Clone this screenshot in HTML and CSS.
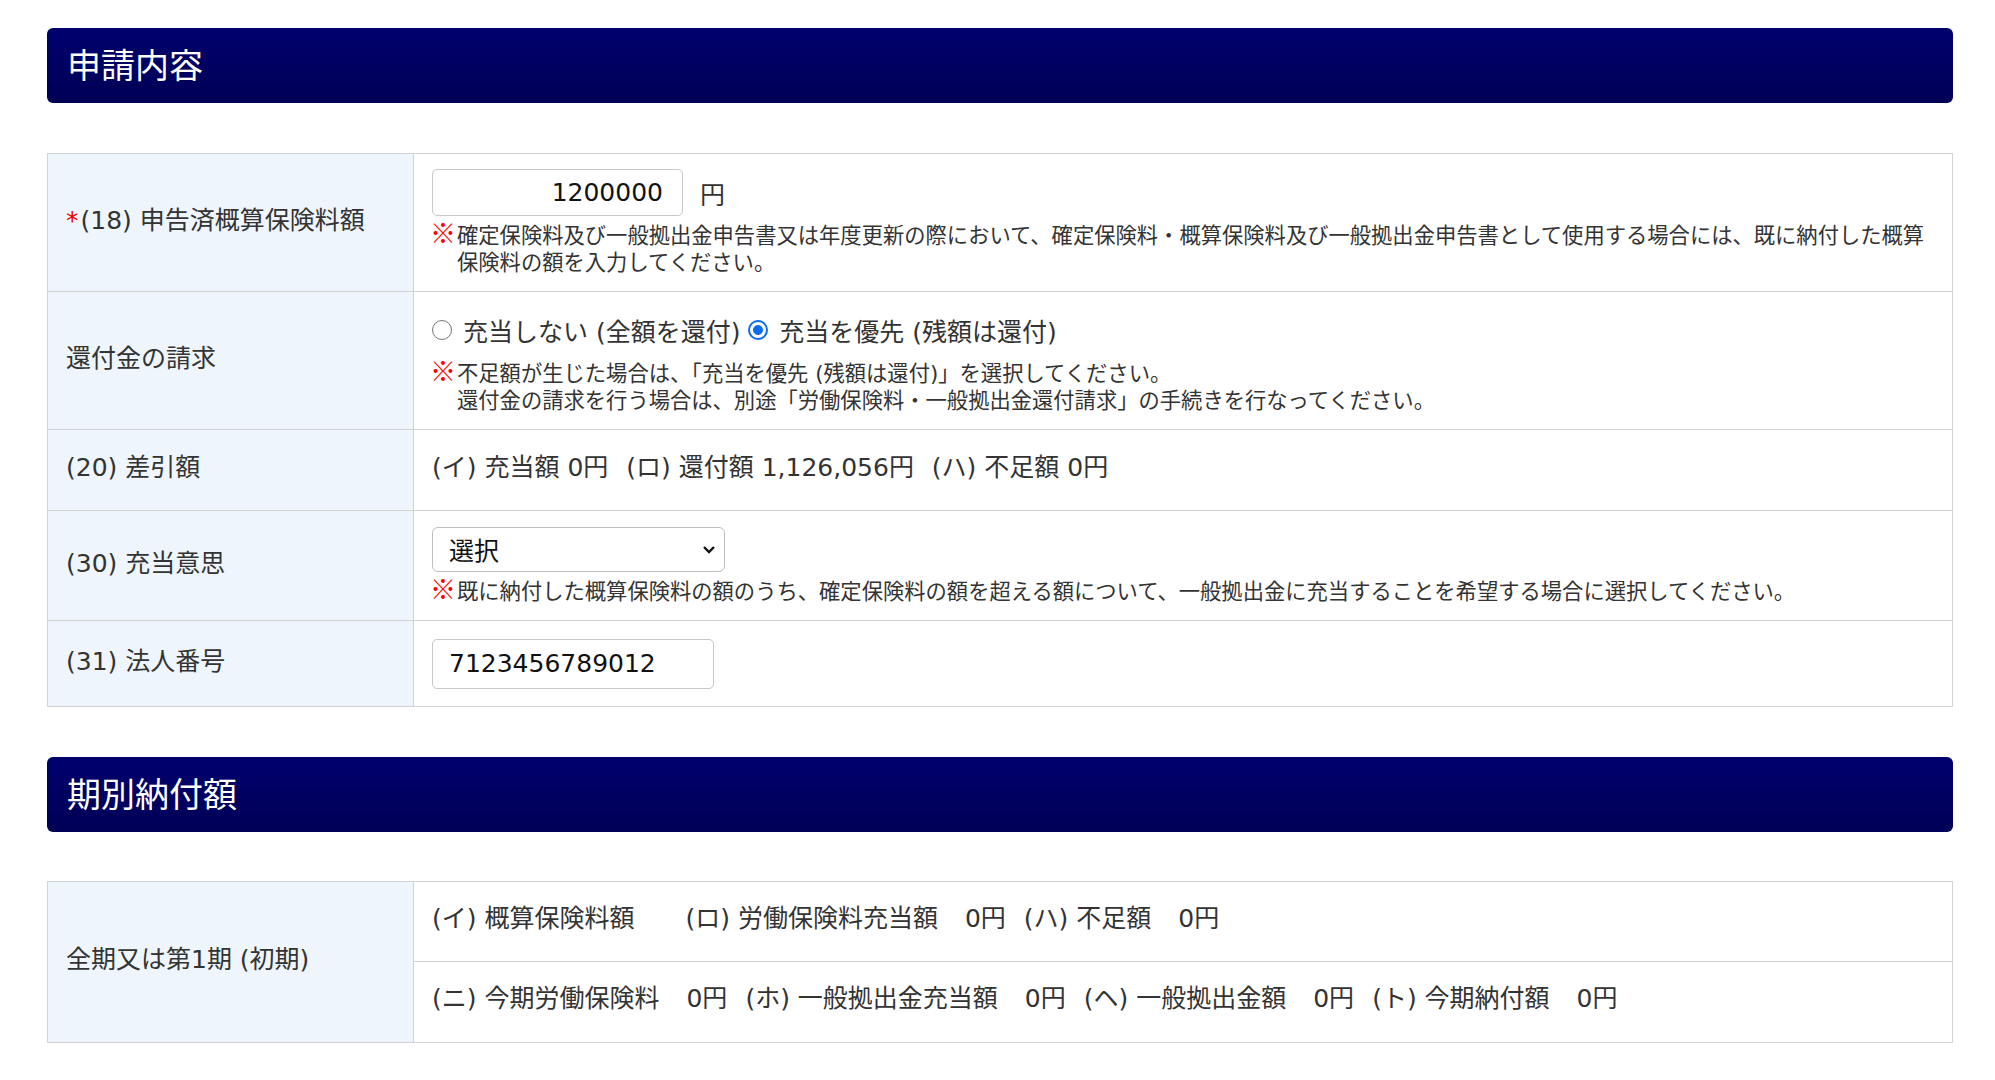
FILE: index.html
```html
<!DOCTYPE html>
<html lang="ja">
<head>
    <meta charset="UTF-8">
    <meta name="viewport" content="width=device-width, initial-scale=1.0">
    <title>申請内容</title>
    <link rel="stylesheet" href="styles.css">
</head>
<body>
    <div class="page">
        <h2 class="section-title">申請内容</h2>

        <table class="form-table">
            <tr class="row-18">
                <th><span class="req">*</span>(18) 申告済概算保険料額</th>
                <td>
                    <div class="amount-line">
                        <input type="text" class="text-input num" value="1200000">
                        <span class="unit">円</span>
                    </div>
                    <p class="note"><span class="mark">※</span>確定保険料及び一般拠出金申告書又は年度更新の際において、確定保険料・概算保険料及び一般拠出金申告書として使用する場合には、既に納付した概算<br>保険料の額を入力してください。</p>
                </td>
            </tr>
            <tr class="row-refund">
                <th>還付金の請求</th>
                <td>
                    <div class="radio-line">
                        <label class="radio"><input type="radio" name="refund"> 充当しない (全額を還付)</label>
                        <label class="radio"><input type="radio" name="refund" checked> 充当を優先 (残額は還付)</label>
                    </div>
                    <p class="note"><span class="mark">※</span>不足額が生じた場合は、「充当を優先 (残額は還付)」を選択してください。<br>還付金の請求を行う場合は、別途「労働保険料・一般拠出金還付請求」の手続きを行なってください。</p>
                </td>
            </tr>
            <tr class="row-20">
                <th>(20) 差引額</th>
                <td class="plain">
                    <span class="pair">(イ) 充当額 0円</span>
                    <span class="pair">(ロ) 還付額 1,126,056円</span>
                    <span class="pair">(ハ) 不足額 0円</span>
                </td>
            </tr>
            <tr class="row-30">
                <th>(30) 充当意思</th>
                <td>
                    <div class="select-wrap">
                        <select class="select">
                            <option>選択</option>
                        </select>
                        <svg class="chevron" width="14" height="10" viewBox="0 0 14 10">
                            <path d="M2 2 L7 7 L12 2" fill="none" stroke="#111" stroke-width="2.4"/>
                        </svg>
                    </div>
                    <p class="note"><span class="mark">※</span>既に納付した概算保険料の額のうち、確定保険料の額を超える額について、一般拠出金に充当することを希望する場合に選択してください。</p>
                </td>
            </tr>
            <tr class="row-31">
                <th>(31) 法人番号</th>
                <td>
                    <input type="text" class="text-input corp" value="7123456789012">
                </td>
            </tr>
        </table>

        <h2 class="section-title">期別納付額</h2>

        <table class="form-table period-table">
            <tr>
                <th rowspan="2">全期又は第1期 (初期)</th>
                <td class="plain">
                    <div class="items">
                        <span class="item">(イ) 概算保険料額<span class="amt blank"></span></span>
                        <span class="item">(ロ) 労働保険料充当額<span class="amt">0円</span></span>
                        <span class="item">(ハ) 不足額<span class="amt">0円</span></span>
                    </div>
                </td>
            </tr>
            <tr>
                <td class="plain">
                    <div class="items">
                        <span class="item">(ニ) 今期労働保険料<span class="amt">0円</span></span>
                        <span class="item">(ホ) 一般拠出金充当額<span class="amt">0円</span></span>
                        <span class="item">(ヘ) 一般拠出金額<span class="amt">0円</span></span>
                        <span class="item">(ト) 今期納付額<span class="amt">0円</span></span>
                    </div>
                </td>
            </tr>
        </table>
    </div>
</body>
</html>
```

FILE: styles.css
```css
body {
    margin: 0;
    background: #fff;
    color: #333;
    font-family: "DejaVu Sans", "Noto Sans CJK JP", sans-serif;
    font-size: 25px;
}
.page {
    padding: 28px 42px 30px 47px;
}
.section-title {
    margin: 0;
    height: 75px;
    box-sizing: border-box;
    display: flex;
    align-items: center;
    padding: 0 0 5px 20px;
    border-radius: 6px;
    background: linear-gradient(#00006e, #000056);
    color: #fff;
    font-family: "Noto Sans CJK JP", sans-serif;
    font-size: 34px;
    font-weight: normal;
}
.form-table {
    width: 100%;
    border-collapse: collapse;
    margin: 50px 0 50px;
}
.form-table th,
.form-table td {
    border: 1px solid #d2d2d2;
    vertical-align: middle;
}
.form-table th {
    width: 347px;
    padding: 0 0 4px 18px;
    background: #eef5fc;
    text-align: left;
    font-weight: normal;
    line-height: 34px;
}
.form-table td {
    padding: 0 18px;
    background: #fff;
}
.req {
    color: #e00;
    margin-right: 2px;
}
.row-18 td { height: 137px; }
.row-refund td { height: 137px; }
.row-20 td { height: 76px; }
.row-30 td { height: 109px; }
.row-31 td { height: 85px; }

.amount-line {
    display: flex;
    align-items: center;
}
.text-input {
    box-sizing: border-box;
    height: 47px;
    border: 1px solid #c8c8c8;
    border-radius: 5px;
    font-family: "DejaVu Sans", "Noto Sans CJK JP", sans-serif;
    font-size: 25px;
    color: #111;
    background: #fff;
}
.num {
    width: 251px;
    padding: 0 19px 0 10px;
    text-align: right;
}
.corp {
    width: 282px;
    height: 50px;
    padding: 0 16px;
}
.unit {
    margin-left: 17px;
}
.note {
    margin: 6px 0 0;
    padding-left: 25px;
    text-indent: -25px;
    font-size: 21.3px;
    line-height: 27px;
    color: #333;
}
.mark {
    display: inline-block;
    width: 25px;
    text-indent: 0;
    color: #f00;
    font-family: "Noto Sans CJK JP", sans-serif;
    font-size: 26px;
    font-weight: 900;
    line-height: 20px;
    margin-left: -2px;
    margin-right: 2px;
}
.radio-line {
    display: flex;
    align-items: center;
    height: 44px;
    padding-bottom: 2px;
}
.radio {
    display: flex;
    align-items: center;
    margin-right: 8px;
    white-space: pre;
}
.radio input {
    appearance: none;
    box-sizing: border-box;
    width: 20px;
    height: 20px;
    margin: 0 3px 0 0;
    border: 1.5px solid #767676;
    border-radius: 50%;
    background: #fff;
}
.radio input:checked {
    border: 2px solid #0b6cf0;
    background: radial-gradient(circle, #0b6cf0 0 4.5px, #fff 5.3px);
}
.plain {
    line-height: 34px;
}
.row-20 .plain {
    padding-bottom: 4px;
}
.pair {
    margin-right: 10px;
}
.select-wrap {
    position: relative;
    display: inline-block;
}
.select {
    appearance: none;
    box-sizing: border-box;
    width: 293px;
    height: 45px;
    padding: 0 16px;
    border: 1px solid #bdbdbd;
    border-radius: 6px;
    background: #fff;
    color: #111;
    font-family: "Noto Sans CJK JP", sans-serif;
    font-size: 25px;
}
.chevron {
    position: absolute;
    right: 9px;
    top: 18px;
    pointer-events: none;
}
.period-table {
    margin-top: 49px;
}
.period-table th {
    width: 347px;
}
.period-table .plain {
    padding-bottom: 6px;
}
.period-table tr:first-child td { height: 73px; }
.period-table tr:last-child td { height: 74px; }
.items {
    display: flex;
    column-gap: 18px;
}
.amt {
    margin-left: 27px;
}
.amt.blank {
    margin-left: 33px;
}
```
